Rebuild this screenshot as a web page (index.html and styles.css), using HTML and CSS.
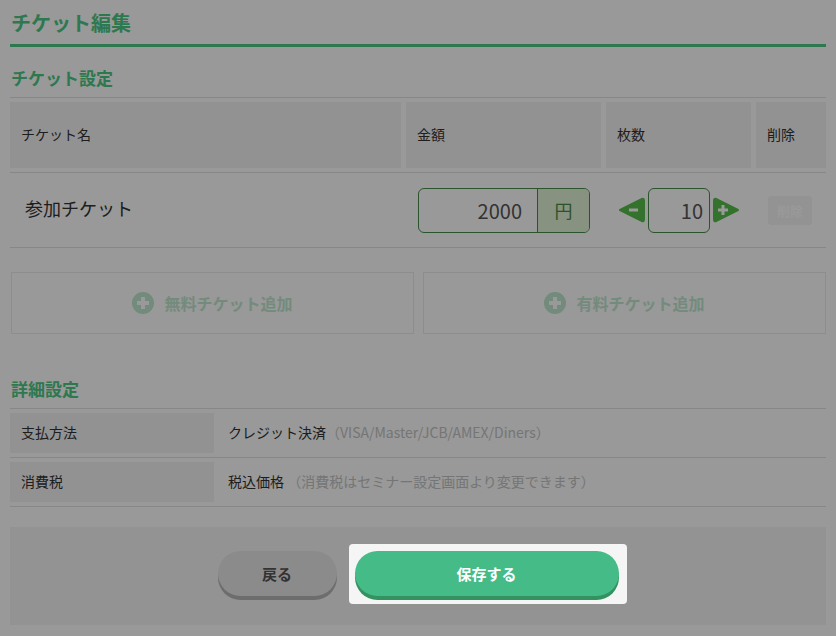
FILE: index.html
```html
<!DOCTYPE html>
<html lang="ja">
<head>
    <meta charset="UTF-8">
    <meta name="viewport" content="width=device-width, initial-scale=1.0">
    <title>チケット編集</title>
    <link rel="stylesheet" href="styles.css">
</head>
<body>

    <div class="page">
        <!-- Page title -->
        <h1 class="page-title">チケット編集</h1>

        <!-- Ticket settings -->
        <h2 class="section-title">チケット設定</h2>
        <div class="ticket-table">
            <div class="ticket-row ticket-head">
                <div class="head-cell">チケット名</div>
                <div class="head-cell">金額</div>
                <div class="head-cell">枚数</div>
                <div class="head-cell">削除</div>
            </div>
            <div class="ticket-row ticket-body">
                <div class="ticket-name">参加チケット</div>
                <div class="price-cell">
                    <div class="price-group">
                        <span class="price-value">2000</span>
                        <span class="price-unit">円</span>
                    </div>
                </div>
                <div class="count-cell">
                    <button class="arrow-btn" type="button">
                        <svg width="27" height="28" viewBox="0 0 27 28">
                            <path d="M2 14 L24 3 Q26 2 26 5 L26 23 Q26 26 24 25 Z" fill="#57bf4b" stroke="#57bf4b" stroke-width="2" stroke-linejoin="round"/>
                            <rect x="11" y="12.5" width="9" height="3" fill="#fff"/>
                        </svg>
                    </button>
                    <div class="count-input">10</div>
                    <button class="arrow-btn" type="button">
                        <svg width="27" height="28" viewBox="0 0 27 28">
                            <path d="M25 14 L3 3 Q1 2 1 5 L1 23 Q1 26 3 25 Z" fill="#57bf4b" stroke="#57bf4b" stroke-width="2" stroke-linejoin="round"/>
                            <rect x="5" y="12.5" width="10" height="3" fill="#fff"/>
                            <rect x="8.5" y="9" width="3" height="10" fill="#fff"/>
                        </svg>
                    </button>
                </div>
                <div class="delete-cell">
                    <button class="delete-btn" type="button" disabled>削除</button>
                </div>
            </div>
        </div>

        <div class="add-buttons">
            <button class="add-btn" type="button">
                <span class="plus-icon">
                    <svg width="22" height="22" viewBox="0 0 22 22">
                        <circle cx="11" cy="11" r="11" fill="#bfe8d1"/>
                        <rect x="5" y="9" width="12" height="4" fill="#fff"/>
                        <rect x="9" y="5" width="4" height="12" fill="#fff"/>
                    </svg>
                </span>
                無料チケット追加
            </button>
            <button class="add-btn" type="button">
                <span class="plus-icon">
                    <svg width="22" height="22" viewBox="0 0 22 22">
                        <circle cx="11" cy="11" r="11" fill="#bfe8d1"/>
                        <rect x="5" y="9" width="12" height="4" fill="#fff"/>
                        <rect x="9" y="5" width="4" height="12" fill="#fff"/>
                    </svg>
                </span>
                有料チケット追加
            </button>
        </div>

        <!-- Detail settings -->
        <h2 class="section-title detail-title">詳細設定</h2>
        <div class="detail-row">
            <div class="detail-label">支払方法</div>
            <div class="detail-value">クレジット決済<span class="note">（VISA/Master/JCB/AMEX/Diners）</span></div>
        </div>
        <div class="detail-row">
            <div class="detail-label">消費税</div>
            <div class="detail-value">税込価格 <span class="note">（消費税はセミナー設定画面より変更できます）</span></div>
        </div>

        <!-- Footer actions -->
        <div class="footer-actions">
            <button class="back-btn" type="button">戻る</button>
            <div class="highlight">
                <button class="save-btn" type="button">保存する</button>
            </div>
        </div>
    </div>

    <!-- Tour overlay -->
    <div class="overlay"></div>

</body>
</html>
```

FILE: styles.css
```css
/* Basic reset */
* {
    margin: 0;
    padding: 0;
    box-sizing: border-box;
}

body {
    font-family: "Noto Sans CJK JP", "Noto Sans", sans-serif;
    background-color: #fff;
    color: #333;
}

button {
    font-family: inherit;
    border: none;
    background: none;
    cursor: pointer;
}

.page {
    padding: 8px 10px 11px;
}

.page-title {
    font-size: 20px;
    line-height: 30px;
    font-weight: bold;
    color: #4bc884;
    padding: 0 1px 6px;
    border-bottom: 3px solid #4bc884;
}

.section-title {
    margin-top: 18px;
    font-size: 17px;
    line-height: 26px;
    font-weight: bold;
    color: #4bc884;
    padding: 0 1px 6px;
    border-bottom: 1px solid #e2e2e2;
}

/* Ticket table */
.ticket-row {
    display: grid;
    grid-template-columns: 391px 195px 145px 70px;
    gap: 5px;
    padding: 4px 0;
    border-bottom: 1px solid #e2e2e2;
}

.head-cell {
    background-color: #f4f4f4;
    height: 66px;
    padding: 0 0 3px 11px;
    display: flex;
    align-items: center;
    font-size: 14px;
}

.ticket-body {
    height: 75px;
    align-items: center;
}

.ticket-name {
    padding: 0 0 5px 15px;
    font-size: 18px;
}

.price-cell {
    padding-left: 12px;
}

.price-group {
    display: flex;
    width: 172px;
    height: 45px;
    border: 1px solid #4a8c4a;
    border-radius: 6px;
    overflow: hidden;
}

.price-value {
    flex: 1;
    text-align: right;
    padding-right: 15px;
    font-size: 20px;
    line-height: 43px;
    color: #555;
}

.price-unit {
    width: 52px;
    border-left: 1px solid #4a8c4a;
    background-color: #e3f3d6;
    text-align: center;
    font-size: 18px;
    line-height: 43px;
    color: #4a8c4a;
}

.count-cell {
    display: flex;
    align-items: center;
    gap: 3px;
    padding-left: 12px;
}

.arrow-btn {
    width: 27px;
    height: 28px;
    display: flex;
}

.count-input {
    width: 62px;
    height: 45px;
    border: 1px solid #4a8c4a;
    border-radius: 6px;
    text-align: right;
    padding-right: 6px;
    font-size: 20px;
    line-height: 43px;
    color: #555;
}

.delete-cell {
    padding-left: 12px;
}

.delete-btn {
    width: 44px;
    height: 29px;
    border-radius: 3px;
    background-color: #f6f6f6;
    color: #fff;
    font-size: 13px;
    font-weight: bold;
}

/* Add ticket buttons */
.add-buttons {
    display: flex;
    gap: 9px;
    margin: 24px 0 0 1px;
}

.add-btn {
    flex: 1;
    height: 62px;
    border: 1px solid #ececec;
    display: flex;
    align-items: center;
    justify-content: center;
    gap: 10px;
    font-size: 16px;
    font-weight: bold;
    color: #bfe8d1;
}

.plus-icon {
    display: flex;
}

/* Detail settings */
.detail-title {
    margin-top: 42px;
}

.detail-row {
    display: grid;
    grid-template-columns: 204px 1fr;
    gap: 14px;
    padding: 4px 0;
    border-bottom: 1px solid #e2e2e2;
    font-size: 14px;
}

.detail-label {
    background-color: #f4f4f4;
    height: 40px;
    padding-left: 11px;
    line-height: 39px;
}

.detail-value {
    line-height: 39px;
}

.note {
    color: #c4c4c4;
}

/* Footer */
.footer-actions {
    margin-top: 20px;
    height: 98px;
    background-color: #f5f5f5;
    display: flex;
    justify-content: center;
    align-items: flex-start;
    gap: 18px;
    padding-top: 24px;
}

.back-btn {
    width: 119px;
    height: 45px;
    border-radius: 23px;
    background-color: #e8e8e8;
    box-shadow: 0 4px 0 #b6b6b6;
    font-size: 15px;
    font-weight: bold;
    color: #555;
}

.highlight {
    position: relative;
    z-index: 2;
    margin: -7px -8px 0 -6px;
    padding: 7px 8px 8px 6px;
    background-color: #f5f5f5;
    border-radius: 4px;
}

.save-btn {
    display: block;
    width: 264px;
    height: 45px;
    border-radius: 23px;
    background-color: #45bb88;
    box-shadow: 0 4px 0 #33925f;
    font-size: 15px;
    font-weight: bold;
    color: #fff;
}

.overlay {
    position: fixed;
    inset: 0;
    z-index: 1;
    background-color: rgba(0, 0, 0, 0.4);
}
```
